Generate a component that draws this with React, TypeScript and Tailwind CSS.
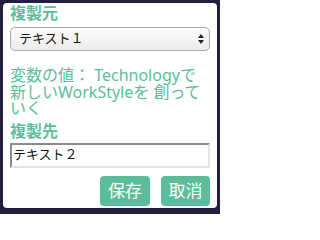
import React from "react";

export default function App() {
  const font = { fontFamily: '"Noto Sans", "Noto Sans CJK JP", sans-serif' };
  return (
    <div className="w-[220px] h-[214px] bg-[#221e3f] pt-[3px] px-[3px]" style={font}>
      <div className="w-[214px] h-[205px] bg-white rounded-[4px] px-[7px] flex flex-col">
        <div className="text-[16px] leading-[18px] font-bold text-[#5cbd9b] pt-[1px]">複製元</div>
        <div className="mt-[5px] h-[24px] w-[200px] rounded-[5px] border border-[#a9a9a9] bg-gradient-to-b from-[#fbfbfb] to-[#ececec] flex items-center justify-between pl-[8px] pr-[5px]">
          <span className="text-[13px] text-[#111]">テキスト１</span>
          <svg width="6" height="10" viewBox="0 0 6 10">
            <path d="M3 0 L6 4 L0 4 Z" fill="#222" />
            <path d="M3 10 L6 6 L0 6 Z" fill="#222" />
          </svg>
        </div>
        <div className="mt-[16px] text-[16px] leading-[16.5px] text-[#5cbd9b]">
          変数の値： Technologyで新しいWorkStyleを 創っていく
        </div>
        <div className="mt-[5px] text-[16px] leading-[18px] font-bold text-[#5cbd9b]">複製先</div>
        <div className="mt-[3px] h-[25px] w-[200px] border-2 border-t-[#8c8c8c] border-l-[#8c8c8c] border-r-[#e4e4e4] border-b-[#e4e4e4] flex items-center pl-[1px]">
          <span className="text-[13px] text-[#111]">テキスト２</span>
        </div>
        <div className="mt-[8px] flex justify-end gap-[11px]">
          <div className="w-[50px] h-[30px] rounded-[4px] bg-[#5cbd9b] text-white text-[17px] flex items-center justify-center">保存</div>
          <div className="w-[49px] h-[30px] rounded-[4px] bg-[#5cbd9b] text-white text-[17px] flex items-center justify-center">取消</div>
        </div>
      </div>
    </div>
  );
}
